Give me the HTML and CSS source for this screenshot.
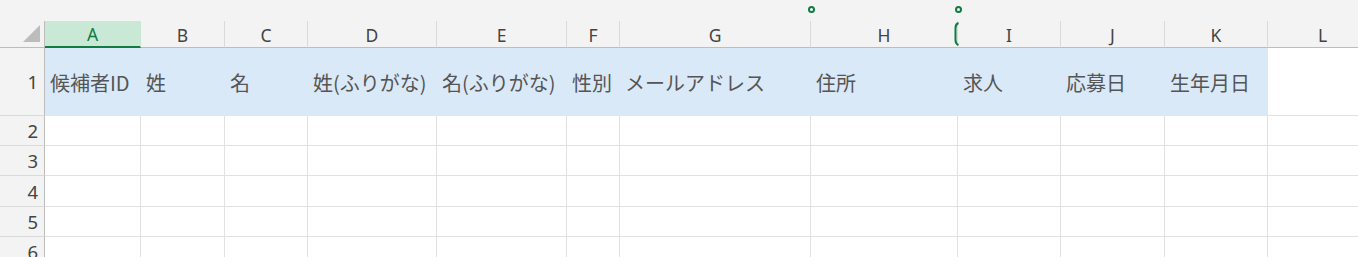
FILE: index.html
```html
<!DOCTYPE html>
<html lang="ja">
<head>
    <meta charset="UTF-8">
    <meta name="viewport" content="width=device-width, initial-scale=1.0">
    <title>候補者リスト</title>
    <link rel="stylesheet" href="styles.css">
</head>
<body>
    <div class="sheet">
        <div class="topbar"></div>

        <div class="grid">
            <!-- column headers -->
            <div class="corner"><span class="select-all"></span></div>
            <div class="col-head active">A</div>
            <div class="col-head">B</div>
            <div class="col-head">C</div>
            <div class="col-head">D</div>
            <div class="col-head">E</div>
            <div class="col-head">F</div>
            <div class="col-head">G</div>
            <div class="col-head">H</div>
            <div class="col-head">I</div>
            <div class="col-head">J</div>
            <div class="col-head">K</div>
            <div class="col-head">L</div>

            <!-- row 1 -->
            <div class="row-head">1</div>
            <div class="cell filled">候補者ID</div>
            <div class="cell filled">姓</div>
            <div class="cell filled">名</div>
            <div class="cell filled">姓(ふりがな)</div>
            <div class="cell filled">名(ふりがな)</div>
            <div class="cell filled">性別</div>
            <div class="cell filled">メールアドレス</div>
            <div class="cell filled">住所</div>
            <div class="cell filled">求人</div>
            <div class="cell filled">応募日</div>
            <div class="cell filled">生年月日</div>
            <div class="cell"></div>

            <div class="row-head">2</div>
            <div class="cell"></div><div class="cell"></div><div class="cell"></div><div class="cell"></div><div class="cell"></div><div class="cell"></div><div class="cell"></div><div class="cell"></div><div class="cell"></div><div class="cell"></div><div class="cell"></div><div class="cell"></div>

            <div class="row-head">3</div>
            <div class="cell"></div><div class="cell"></div><div class="cell"></div><div class="cell"></div><div class="cell"></div><div class="cell"></div><div class="cell"></div><div class="cell"></div><div class="cell"></div><div class="cell"></div><div class="cell"></div><div class="cell"></div>

            <div class="row-head">4</div>
            <div class="cell"></div><div class="cell"></div><div class="cell"></div><div class="cell"></div><div class="cell"></div><div class="cell"></div><div class="cell"></div><div class="cell"></div><div class="cell"></div><div class="cell"></div><div class="cell"></div><div class="cell"></div>

            <div class="row-head">5</div>
            <div class="cell"></div><div class="cell"></div><div class="cell"></div><div class="cell"></div><div class="cell"></div><div class="cell"></div><div class="cell"></div><div class="cell"></div><div class="cell"></div><div class="cell"></div><div class="cell"></div><div class="cell"></div>

            <div class="row-head">6</div>
            <div class="cell"></div><div class="cell"></div><div class="cell"></div><div class="cell"></div><div class="cell"></div><div class="cell"></div><div class="cell"></div><div class="cell"></div><div class="cell"></div><div class="cell"></div><div class="cell"></div><div class="cell"></div>
        </div>

        <!-- drawing handles over the sheet -->
        <span class="handle handle-h"></span>
        <span class="handle handle-i"></span>
        <svg class="bracket" width="6" height="24" viewBox="0 0 6 24">
            <path d="M4.5 1 Q1.5 2 1.5 6 L1.5 18 Q1.5 22 4.5 23" fill="none" stroke="#107c41" stroke-width="2"/>
        </svg>
    </div>
</body>
</html>
```

FILE: styles.css
```css
* {
    box-sizing: border-box;
}
body {
    margin: 0;
    background-color: #ffffff;
    overflow: hidden;
}
.sheet {
    position: relative;
    width: 1358px;
    height: 257px;
    overflow: hidden;
}
.topbar {
    height: 21px;
    background-color: #f3f3f3;
}
.grid {
    display: grid;
    grid-template-columns: 45px 96px 84px 83px 129px 130px 53px 191px 147px 103px 104px 103px 110px;
    grid-template-rows: 27px 68px 30px 30px 31px 30px 30px;
}
.corner {
    background-color: #f3f3f3;
    border-right: 1px solid #bdbdbd;
    border-bottom: 1px solid #bdbdbd;
    position: relative;
}
.select-all {
    position: absolute;
    left: 23px;
    top: 4px;
    width: 0;
    height: 0;
    border-style: solid;
    border-width: 0 0 17px 17px;
    border-color: transparent transparent #bcbcbc transparent;
}
.col-head {
    background-color: #f3f3f3;
    border-right: 1px solid #dadada;
    border-bottom: 1px solid #bdbdbd;
    display: flex;
    align-items: center;
    justify-content: center;
    font-family: "Noto Sans", "Open Sans", sans-serif;
    font-size: 17.5px;
    color: #444;
    padding-top: 1px;
}
.col-head.active {
    background-color: #c9e8d5;
    color: #107c41;
    border-bottom: 2px solid #107c41;
    border-right-color: #c9e8d5;
}
.row-head {
    background-color: #f3f3f3;
    border-right: 1px solid #bdbdbd;
    border-bottom: 1px solid #dadada;
    display: flex;
    align-items: center;
    justify-content: flex-end;
    padding-right: 6px;
    font-family: "Noto Sans", "Open Sans", sans-serif;
    font-size: 18.5px;
    color: #444;
}
.cell {
    border-right: 1px solid #e1e1e1;
    border-bottom: 1px solid #e1e1e1;
    display: flex;
    align-items: center;
    padding-left: 5px;
    white-space: nowrap;
    font-family: "Noto Sans CJK JP", "Noto Sans", sans-serif;
    font-size: 20px;
    color: #555;
}
.cell.filled {
    background-color: #dae9f8;
    border-right-color: #dae9f8;
    border-bottom-color: #dae9f8;
    padding-top: 1px;
}
.handle {
    position: absolute;
    top: 6px;
    width: 7px;
    height: 7px;
    border: 2px solid #107c41;
    border-radius: 50%;
    background-color: #ffffff;
}
.handle-h {
    left: 808px;
}
.handle-i {
    left: 955px;
}
.bracket {
    position: absolute;
    left: 954px;
    top: 22px;
}
```
